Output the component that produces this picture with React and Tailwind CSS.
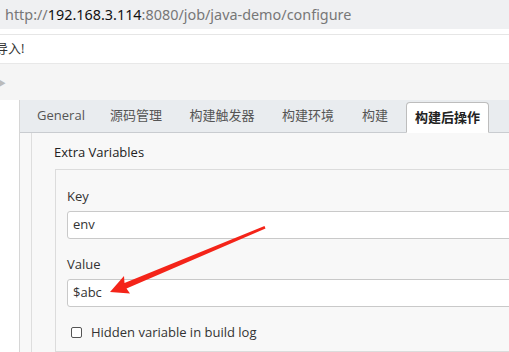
import React from "react";

const tabs = [
  { name: "General", w: "w-[70px]" },
  { name: "源码管理", w: "w-[80px]" },
  { name: "构建触发器", w: "w-[92px]" },
  { name: "构建环境", w: "w-[80px]" },
  { name: "构建", w: "w-[54px]" },
];

function RedArrow() {
  return (
    <svg className="absolute left-0 top-0 pointer-events-none" width="509" height="352">
      <polygon
        points="110,292 124,276 124.5,283 264.5,226 265.5,228.5 126.5,288.6 130,293.5"
        fill="#f42419"
      />
    </svg>
  );
}

function Field({ label, value }) {
  return (
    <div className="flex flex-col">
      <div className="h-[20px] flex items-center text-[13px] text-[#333]">{label}</div>
      <div className="mt-[4px] h-[28px] w-[500px] shrink-0 bg-white border border-[#c9c9c9] rounded-[3px] flex items-center pl-[5px] text-[13px] text-[#333]">
        {value}
      </div>
    </div>
  );
}

export default function App() {
  return (
    <div
      className="relative w-[509px] h-[352px] overflow-hidden bg-[#f5f5f5]"
      style={{ fontFamily: '"Open Sans", "Noto Sans CJK SC", sans-serif' }}
    >
      <div className="h-[29px] bg-[#eff0f2] flex items-center pl-[5px] text-[14.4px] text-[#777]" style={{ fontFamily: '"Noto Sans", "Noto Sans CJK SC", sans-serif' }}>
        <span>http://</span>
        <span className="text-[#111]">192.168.3.114</span>
        <span>:8080/job/java-demo/configure</span>
      </div>
      <div className="h-[6px] bg-white border-b border-[#e6e6e6]"></div>
      <div className="h-[29px] bg-white border-b border-[#e8e8e8] flex items-center text-[13px] text-[#333] -ml-[5px]">
        导入!
      </div>
      <div className="h-[36px] flex items-center">
        <span className="text-[8px] text-[#bbb] -ml-[2px] mt-[1px]">▶</span>
      </div>
      <div className="flex h-[252px]">
        <div className="w-[19px] shrink-0 bg-white"></div>
        <div className="flex-1 min-w-0 overflow-hidden flex flex-col border-l border-[#d6d6d6] bg-[#f8f8f8]">
          <div className="h-[33px] shrink-0 bg-[#e9ecef] border-b border-[#c9ccd0] flex items-end pl-[6px] text-[13px] text-[#555]">
            {tabs.map((t) => (
              <div key={t.name} className={`${t.w} shrink-0 h-full flex items-center justify-center`}>
                {t.name}
              </div>
            ))}
            <div className="ml-[4px] w-[83px] shrink-0 h-[31px] -mb-px bg-white border border-[#bdbdbd] border-b-white rounded-t-[4px] flex items-center justify-center font-bold text-[#222]">
              构建后操作
            </div>
          </div>
          <div className="flex flex-1">
            <div className="w-[12px] shrink-0 border-r border-[#dedede]"></div>
            <div className="flex-1 min-w-0 flex flex-col pl-[22px]">
              <div className="h-[36px] flex items-center text-[13px] text-[#222] pt-[4px]">Extra Variables</div>
              <div className="ml-px border border-[#dcdcdc] border-r-0 flex-1 flex flex-col pl-[11px] pt-[17px]">
                <Field label="Key" value="env" />
                <div className="mt-[16px]">
                  <Field label="Value" value="$abc" />
                </div>
                <div className="mt-[16px] flex items-center text-[13px] text-[#333]">
                  <span className="ml-[4px] w-[11px] h-[11px] shrink-0 bg-white border border-[#555] rounded-[2px]"></span>
                  <span className="ml-[9px]">Hidden variable in build log</span>
                </div>
              </div>
            </div>
          </div>
        </div>
      </div>
      <RedArrow />
    </div>
  );
}
